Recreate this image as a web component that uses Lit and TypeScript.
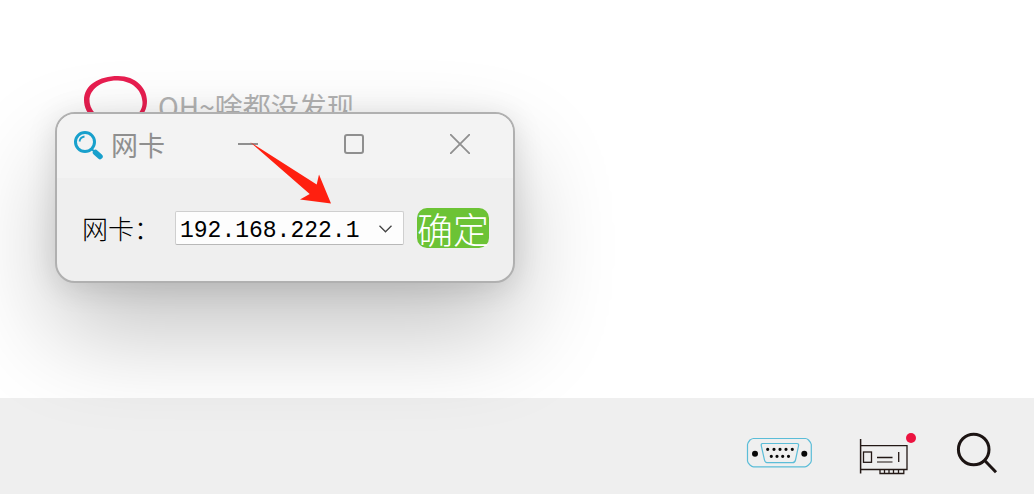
import { LitElement, html, css } from "lit";
import { customElement, state } from "lit/decorators.js";

@customElement("empty-notice")
class EmptyNotice extends LitElement {
  static styles = css`
    :host {
      display: flex;
      align-items: flex-start;
      gap: 10px;
      color: #b4b4b4;
      font: 400 28px/40px "Noto Sans CJK SC", sans-serif;
    }
    .ring {
      width: 64px;
      height: 50px;
    }
    .text {
      margin: 10px 0 0;
    }
  `;
  render() {
    return html`
      <svg class="ring" viewBox="0 0 64 50" aria-hidden="true">
        <path
          fill="#e81e50"
          fill-rule="evenodd"
          d="M34 0C52 0 63 12 63 25C63 40 51 50 33 50C14 50 0 39 0 24C0 9 15 0 34 0ZM34 4.500C17 4 5.500 14 5.500 24C5.500 36 17 45 33 45C49 45 59 37 58.500 26C58 14 48 5 34 4.500Z"
        />
      </svg>
      <p class="text">OH~啥都没发现</p>
    `;
  }
}

@customElement("adapter-dialog")
class AdapterDialog extends LitElement {
  static styles = css`
    :host {
      display: block;
      box-sizing: border-box;
      border: 2px solid #b0b0b0;
      border-radius: 20px;
      background: #efefef;
      box-shadow: 0 48px 100px rgba(0, 0, 0, 0.24), 0 4px 30px rgba(0, 0, 0, 0.12);
      overflow: hidden;
      font-family: "Noto Sans CJK SC", sans-serif;
    }
    .titlebar {
      display: flex;
      height: 64px;
      background: #f3f3f3;
      color: #8f8f8f;
    }
    .caption {
      flex: 1;
      display: flex;
      align-items: center;
      gap: 7px;
      padding: 0 0 2px 16px;
      white-space: nowrap;
    }
    .title {
      margin: 0;
      font-size: 27px;
      line-height: 40px;
      font-weight: 400;
    }
    button {
      border: 0;
      padding: 0;
      font-family: inherit;
    }
    .control {
      display: grid;
      place-items: center;
      width: 106px;
      padding-bottom: 4px;
      background: none;
      color: inherit;
    }
    .form {
      display: flex;
      align-items: center;
      padding: 30px 24px 33px 25px;
    }
    .label {
      flex: 1;
      font-size: 26px;
      line-height: 40px;
      font-weight: 300;
      color: #000;
      white-space: nowrap;
    }
    .field {
      display: grid;
      align-items: center;
      width: 229px;
      margin-right: 13px;
    }
    .select {
      grid-area: 1 / 1;
      appearance: none;
      box-sizing: border-box;
      width: 100%;
      height: 34px;
      margin: 0;
      padding: 3px 36px 0 4px;
      border: 1px solid #cfcfcf;
      border-bottom-color: #b8b8b8;
      border-radius: 2px;
      background: #fdfdfd;
      color: #000;
      font: 23px/32px "Liberation Mono", monospace;
    }
    .chevron {
      grid-area: 1 / 1;
      justify-self: end;
      margin: 2px 12px 0 0;
      pointer-events: none;
    }
    .confirm {
      width: 72px;
      height: 40px;
      border-radius: 10px;
      background: #6cc335;
      color: #fff;
      font-size: 36px;
      line-height: 40px;
      font-weight: 300;
      white-space: nowrap;
    }
  `;

  @state() adapters = ["192.168.222.1"];

  render() {
    return html`
      <header class="titlebar">
        <div class="caption">
          <svg width="31" height="30" viewBox="0 0 31 30" fill="none" stroke="#18a0cc" aria-hidden="true">
            <circle cx="12" cy="12" r="9.500" stroke-width="3" />
            <path d="M6.500 11.500A6 6 0 0 1 11.500 6.500" stroke-width="1.800" />
            <path d="M18.500 19L22 22" stroke-width="2" />
            <path d="M22.500 22.500L27 26.500" stroke-width="5.500" stroke-linecap="round" />
          </svg>
          <h1 class="title">网卡</h1>
        </div>
        <button class="control" aria-label="最小化">
          <svg width="20" height="20" stroke="currentColor" stroke-width="2"><path d="M0 10H20" /></svg>
        </button>
        <button class="control" aria-label="最大化">
          <svg width="20" height="20" stroke="currentColor" stroke-width="2" fill="none">
            <rect x="1" y="1" width="18" height="18" rx="2" />
          </svg>
        </button>
        <button class="control" aria-label="关闭">
          <svg width="20" height="20" stroke="currentColor" stroke-width="1.800"><path d="M0 0L20 20M20 0L0 20" /></svg>
        </button>
      </header>
      <form class="form" @submit=${(e: Event) => e.preventDefault()}>
        <label class="label" for="adapter">网卡：</label>
        <div class="field">
          <select class="select" id="adapter">
            ${this.adapters.map((a) => html`<option>${a}</option>`)}
          </select>
          <svg class="chevron" width="13" height="8" fill="none" stroke="#444" stroke-width="1.300" aria-hidden="true">
            <path d="M.5 .8L6.500 6.800L12.500 .8" />
          </svg>
        </div>
        <button class="confirm" type="submit">确定</button>
      </form>
    `;
  }
}

@customElement("tool-bar")
class ToolBar extends LitElement {
  static styles = css`
    :host {
      display: flex;
      justify-content: flex-end;
      align-items: center;
      box-sizing: border-box;
      height: 96px;
      padding: 16px 36px 0 0;
      gap: 40px;
      background: #efefef;
    }
    .tool {
      display: block;
      border: 0;
      padding: 0;
      background: none;
    }
    .tool svg {
      display: block;
    }
  `;
  render() {
    const dot = (x: number, y: number) => `M${x - 1.6} ${y}a1.600 1.600 0 1 0 3.200 0a1.600 1.600 0 1 0 -3.200 0`;
    const upper = [21.7, 28, 34, 40, 46.3].map((x) => dot(x, 17.3));
    const lower = [25.3, 31, 36.7, 42.5].map((x) => dot(x, 24.3));
    return html`
      <button class="tool" aria-label="串口">
        <svg width="66" height="44" viewBox="0 0 66 44" fill="none">
          <g stroke="#5bbdd8" stroke-width="1.200">
            <path d="M7.500 6.500H59.500Q61 6.500 62.500 8Q65.300 11 65.300 12.500V29Q65.300 30.500 62.500 33Q60.500 34.800 59 34.800H7.500Q6 34.800 4 33Q1.500 30.500 1.500 29V12.500Q1.500 11 4 8Q6 6.500 7.500 6.500Z" />
            <path d="M16.500 11.500H51Q53 11.500 52.500 14L49.500 28Q49 30.600 46.500 30.600H21Q19 30.600 18.500 28L15.300 14Q14.900 11.500 16.500 11.500Z" />
          </g>
          <g fill="#080808">
            <circle cx="9" cy="21.700" r="3" />
            <circle cx="58.300" cy="21.700" r="3" />
            <path d=${[...upper, ...lower].join("")} />
          </g>
        </svg>
      </button>
      <button class="tool" aria-label="网卡">
        <svg width="64" height="44" viewBox="0 0 64 44" fill="none" stroke="#231815" stroke-width="1.300">
          <path d="M8.600 7V41.500" stroke-width="1.500" />
          <path d="M8.500 13.600H55V37.500H8.500" />
          <rect x="11.500" y="20" width="8" height="10.300" />
          <path d="M25 25.500H40.500M46.700 20V30" />
          <path d="M25 30H40.500" stroke="#7a7472" stroke-width="1.800" />
          <path d="M28 37.500V41.500H51.800V37.500M32.500 38V41M37 38V41M41.500 38V41M46.500 38V41" />
          <circle cx="59" cy="6" r="5" fill="#ec1340" stroke="none" />
        </svg>
      </button>
      <button class="tool" aria-label="搜索">
        <svg width="42" height="44" viewBox="0 0 42 44" fill="none" stroke="#1c1413" stroke-width="3">
          <circle cx="17.700" cy="17.500" r="15.300" />
          <path d="M28.700 28.500L40 40.300" />
        </svg>
      </button>
    `;
  }
}

@customElement("app-root")
class AppRoot extends LitElement {
  static styles = css`
    :host {
      display: flex;
      flex-direction: column;
      position: relative;
      min-height: 100vh;
      background: #fff;
      overflow: hidden;
    }
    .workspace {
      flex: 1;
      padding: 76px 84px 0;
    }
    .dialog {
      position: absolute;
      left: 55px;
      top: 112px;
      width: 460px;
    }
    .pointer {
      position: absolute;
      left: 250px;
      top: 142px;
      pointer-events: none;
    }
  `;
  render() {
    return html`
      <main class="workspace"><empty-notice></empty-notice></main>
      <tool-bar></tool-bar>
      <adapter-dialog class="dialog"></adapter-dialog>
      <svg class="pointer" width="82" height="62" aria-hidden="true">
        <path fill="#ff2010" d="M0 0L66.700 42.500L69 32.500L81 61.500L50 57.500L59.700 52Z" />
      </svg>
    `;
  }
}
